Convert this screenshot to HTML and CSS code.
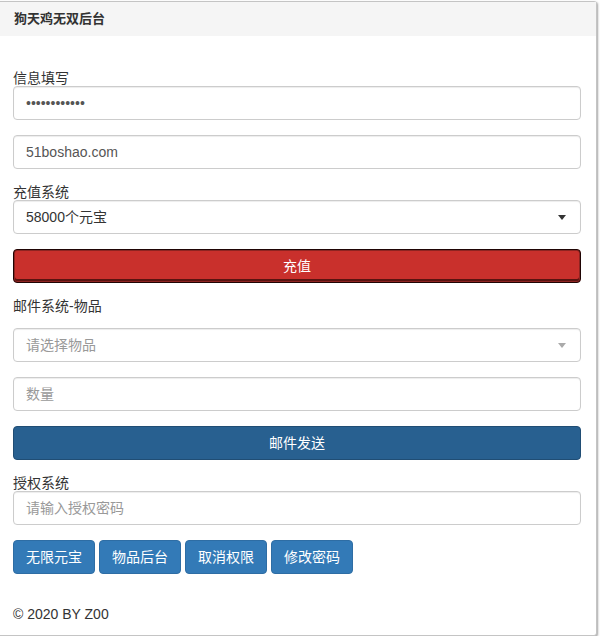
FILE: index.html
```html
<!DOCTYPE html>
<html lang="zh-CN">
<head>
<meta charset="utf-8">
<title>狗天鸡无双后台</title>
<link rel="stylesheet" href="styles.css">
</head>
<body>
<div class="panel">
  <div class="panel-heading">狗天鸡无双后台</div>
  <div class="panel-body">
    <div class="group">
      <label class="label">信息填写</label>
      <input class="control" type="password" value="123456789012">
    </div>
    <div class="group">
      <input class="control" type="text" value="51boshao.com">
    </div>
    <div class="group">
      <label class="label">充值系统</label>
      <div class="select">
        <span>58000个元宝</span>
        <span class="caret"></span>
      </div>
    </div>
    <div class="group">
      <button class="btn btn-block btn-danger">充值</button>
    </div>
    <div class="group group-label">
      <label class="label">邮件系统-物品</label>
    </div>
    <div class="group">
      <div class="select placeholder">
        <span>请选择物品</span>
        <span class="caret caret-light"></span>
      </div>
    </div>
    <div class="group">
      <input class="control" type="text" placeholder="数量">
    </div>
    <div class="group">
      <button class="btn btn-block btn-primary-dark">邮件发送</button>
    </div>
    <div class="group">
      <label class="label">授权系统</label>
      <input class="control" type="text" placeholder="请输入授权密码">
    </div>
    <div class="actions">
      <button class="btn btn-primary">无限元宝</button>
      <button class="btn btn-primary">物品后台</button>
      <button class="btn btn-primary">取消权限</button>
      <button class="btn btn-primary">修改密码</button>
    </div>
    <p class="footer">© 2020 BY Z00</p>
  </div>
</div>
</body>
</html>
```
FILE: styles.css
```css
* { box-sizing: border-box; }
html, body {
  margin: 0;
  padding: 0;
  background: #fff;
}
body {
  font-family: "Liberation Sans", "Noto Sans CJK SC", sans-serif;
  font-size: 14px;
  color: #333;
  overflow: hidden;
}
.panel {
  width: 600px;
  height: 635px;
  margin: 1px 0 0 -3px;
  border: 1px solid #c4c4c4;
  border-radius: 3px;
  box-shadow: 1px 1px 2px rgba(0, 0, 0, 0.35);
  background: #fff;
}
.panel-heading {
  height: 34px;
  padding: 10px 15px 0 16px;
  background: #f5f5f5;
  font-size: 13px;
  font-weight: bold;
  line-height: 14px;
  color: #333;
}
.panel-body {
  padding: 34px 15px 12px 15px;
}
.group {
  margin-bottom: 15px;
}
.group-label {
  margin-bottom: 14px;
}
.label {
  display: block;
  line-height: 16px;
  height: 16px;
  margin: 0;
}
.control, .select {
  display: block;
  width: 100%;
  height: 34px;
  padding: 6px 12px;
  font-family: inherit;
  font-size: 14px;
  line-height: 20px;
  color: #555;
  background: #fff;
  border: 1px solid #ccc;
  border-radius: 4px;
  box-shadow: inset 0 1px 1px rgba(0, 0, 0, 0.075);
  outline: none;
}
.control::placeholder {
  color: #999;
}
.select {
  display: flex;
  align-items: center;
  justify-content: space-between;
  color: #333;
}
.select.placeholder {
  color: #999;
}
.caret {
  width: 0;
  height: 0;
  margin-right: 2px;
  border-left: 4px solid transparent;
  border-right: 4px solid transparent;
  border-top: 5px solid #333;
}
.caret-light {
  border-top-color: #aaa;
}
.btn {
  display: inline-block;
  height: 34px;
  padding: 6px 12px;
  font-family: inherit;
  font-size: 14px;
  line-height: 20px;
  color: #fff;
  border: 1px solid transparent;
  border-radius: 4px;
  text-align: center;
  cursor: pointer;
}
.btn-block {
  display: block;
  width: 100%;
}
.btn-danger {
  background: #c9302c;
  border: 1px solid #1f0504;
  box-shadow: inset 0 0 0 1px #8e2421, inset 0 -2px 0 1px #5a1310;
}
.btn-primary-dark {
  background: #286090;
  border-color: #204d74;
}
.btn-primary {
  background: #337ab7;
  border-color: #2e6da4;
}
.actions {
  display: flex;
  gap: 4px;
}
.footer {
  margin: 30px 0 0 0;
  line-height: 20px;
  color: #333;
}
```
